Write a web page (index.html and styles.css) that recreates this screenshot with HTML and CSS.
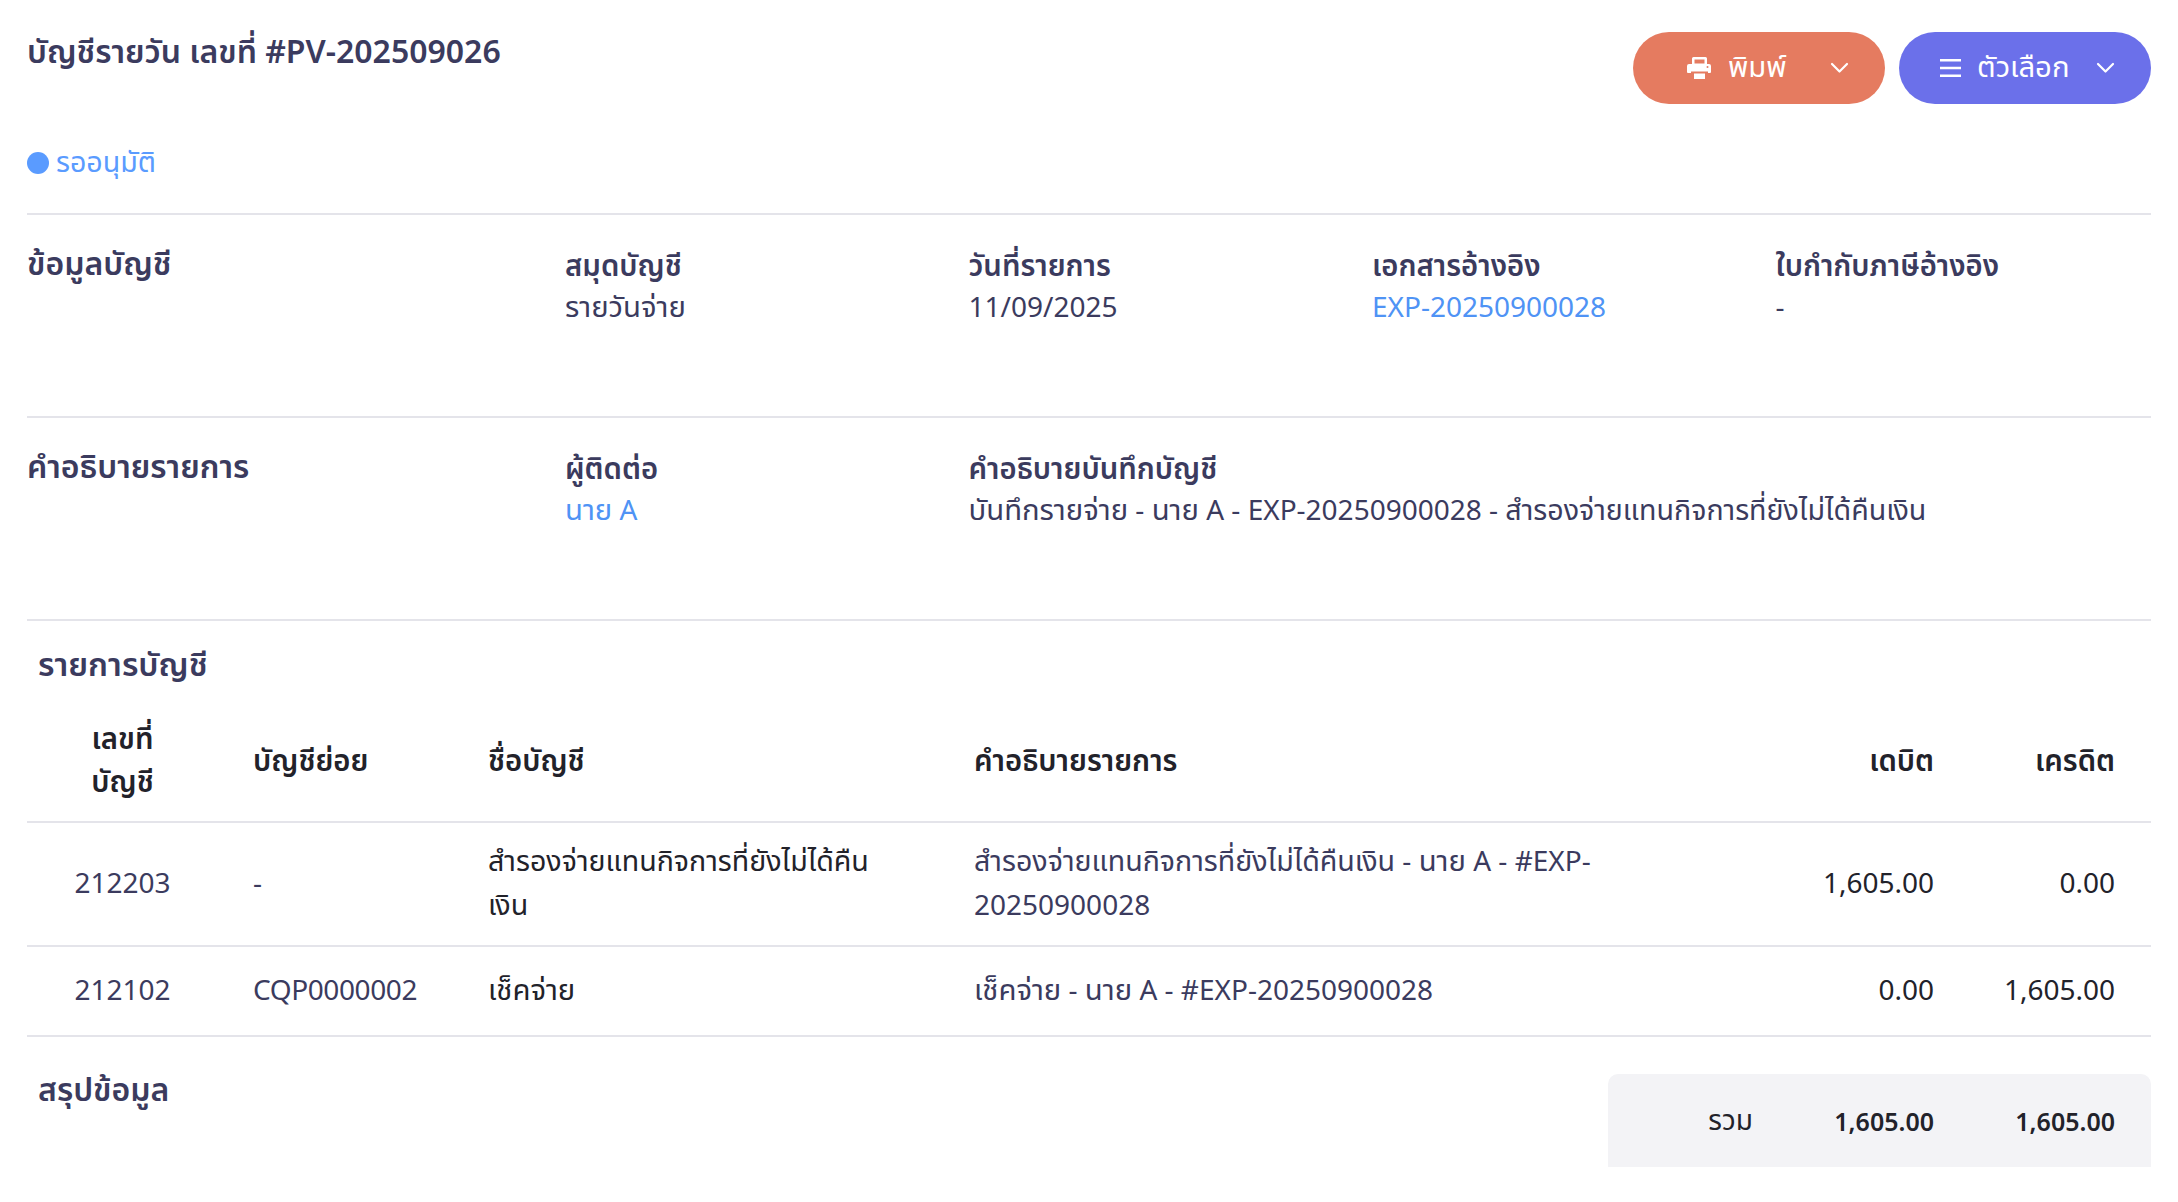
FILE: index.html
```html
<!DOCTYPE html>
<html lang="th">
<head>
<meta charset="utf-8">
<title>บัญชีรายวัน</title>
<link rel="stylesheet" href="styles.css">
</head>
<body>
<main class="page">
  <header class="top">
    <h1 class="title">บัญชีรายวัน เลขที่ #PV-202509026</h1>
    <div class="actions">
      <button class="btn btn-print">
        <svg class="icon-print" viewBox="0 0 24 22" aria-hidden="true"><path fill="#fff" fill-rule="evenodd" d="M5 7V1.5A1.5 1.5 0 0 1 6.5 0h12A1.5 1.5 0 0 1 20 1.5V7h2a2 2 0 0 1 2 2v6a1 1 0 0 1-1 1h-2v-1.5H4V16H1a1 1 0 0 1-1-1V9a2 2 0 0 1 2-2zM7.5 2.5V6.5h10V2.5zM20.5 9a1 1 0 1 0 0 2 1 1 0 0 0 0-2zM7 16.5h11V22H7z"/></svg>
        <span class="label-print">พิมพ์</span>
        <svg class="chev" viewBox="0 0 19 12" aria-hidden="true"><path d="M2 2l7.5 7.5L17 2" fill="none" stroke="#fff" stroke-width="2.2" stroke-linecap="round" stroke-linejoin="round"/></svg>
      </button>
      <button class="btn btn-options">
        <svg class="icon-menu" viewBox="0 0 21 18" aria-hidden="true"><path d="M0 1.3h21M0 9h21M0 16.7h21" fill="none" stroke="#fff" stroke-width="2.6"/></svg>
        <span class="label-options">ตัวเลือก</span>
        <svg class="chev" viewBox="0 0 19 12" aria-hidden="true"><path d="M2 2l7.5 7.5L17 2" fill="none" stroke="#fff" stroke-width="2.2" stroke-linecap="round" stroke-linejoin="round"/></svg>
      </button>
    </div>
  </header>
  <div class="status"><span class="dot"></span><span class="th-long">รออนุมัติ</span></div>

  <section class="info">
    <h2 class="info-title">ข้อมูลบัญชี</h2>
    <div class="field"><div class="label">สมุดบัญชี</div><div class="value th">รายวันจ่าย</div></div>
    <div class="field"><div class="label">วันที่รายการ</div><div class="value">11/09/2025</div></div>
    <div class="field"><div class="label">เอกสารอ้างอิง</div><div class="value link">EXP-20250900028</div></div>
    <div class="field"><div class="label">ใบกำกับภาษีอ้างอิง</div><div class="value">-</div></div>
  </section>

  <section class="info">
    <h2 class="info-title">คำอธิบายรายการ</h2>
    <div class="field"><div class="label">ผู้ติดต่อ</div><div class="value link"><span class="th">นาย</span> A</div></div>
    <div class="field wide"><div class="label">คำอธิบายบันทึกบัญชี</div><div class="value"><span class="th">บันทึกรายจ่าย</span> - <span class="th">นาย</span> A - EXP-20250900028 - <span class="th-long">สำรองจ่ายแทนกิจการที่ยังไม่ได้คืนเงิน</span></div></div>
  </section>

  <section class="ledger">
    <h2 class="sub-title">รายการบัญชี</h2>
    <table class="table">
      <thead>
        <tr>
          <th class="c-no">เลขที่<br>บัญชี</th>
          <th class="c-sub">บัญชีย่อย</th>
          <th class="c-name">ชื่อบัญชี</th>
          <th class="c-desc">คำอธิบายรายการ</th>
          <th class="c-num c-dr">เดบิต</th>
          <th class="c-num c-cr">เครดิต</th>
        </tr>
      </thead>
      <tbody>
        <tr>
          <td class="c-no">212203</td>
          <td class="c-sub">-</td>
          <td class="c-name"><span class="th-long">สำรองจ่ายแทนกิจการที่ยังไม่ได้คืน</span><wbr><span class="th-long">เงิน</span></td>
          <td class="c-desc"><span class="th-long">สำรองจ่ายแทนกิจการที่ยังไม่ได้คืนเงิน</span> - <span class="th">นาย</span> <span>A - #EXP-</span><wbr><span>20250900028</span></td>
          <td class="c-num c-dr">1,605.00</td>
          <td class="c-num c-cr">0.00</td>
        </tr>
        <tr>
          <td class="c-no">212102</td>
          <td class="c-sub c-code">CQP0000002</td>
          <td class="c-name"><span class="th">เช็คจ่าย</span></td>
          <td class="c-desc"><span class="th">เช็คจ่าย</span> - <span class="th">นาย</span> A - #EXP-20250900028</td>
          <td class="c-num c-dr">0.00</td>
          <td class="c-num c-cr">1,605.00</td>
        </tr>
      </tbody>
    </table>
  </section>

  <section class="summary">
    <h2 class="sub-title sub-title-summary">สรุปข้อมูล</h2>
    <div class="total">
      <span class="total-label">รวม</span>
      <span class="total-num">1,605.00</span>
      <span class="total-num">1,605.00</span>
    </div>
  </section>
</main>
</body>
</html>
```
FILE: styles.css
```css
* { box-sizing: border-box; }
html, body { margin: 0; background: #fff; }
body { font-family: "Noto Sans", "Noto Sans Thai", sans-serif; font-size: 28px; color: #3b3b5e; }
.th { font-size: 29.3px; }
.th-long { font-size: 28.6px; }
.page { padding: 32px 27px 35px; }
.top { display: flex; justify-content: space-between; align-items: flex-start; height: 71px; }
.title { margin: 0; font-size: 32px; font-weight: 600; line-height: 38px; }
.actions { display: flex; gap: 14px; }
.btn { width: 252px; height: 72px; border: 0; border-radius: 36px; color: #fff; font: inherit; font-size: 29.3px; display: flex; align-items: center; padding: 0 36px 0 54px; }
.btn-print { background: #e57b60; }
.btn-options { background: #6b70ea; padding-left: 41px; }
.icon-print { width: 24px; height: 22px; flex: none; margin-right: 17px; }
.icon-menu { width: 21px; height: 18px; flex: none; margin-right: 16px; }
.label-print, .label-options { flex: 1; text-align: left; }
.chev { width: 19px; height: 12px; flex: none; }
.status { display: flex; align-items: center; gap: 7px; color: #5a9bff; height: 40px; margin-top: 40px; margin-bottom: 30px; }
.dot { width: 22px; height: 22px; border-radius: 50%; background: #5a9bff; }
.info { display: grid; grid-template-columns: 538px repeat(4, 403.5px); border-top: 2px solid #e4e4ea; height: 203px; padding-top: 28px; }
.info-title { margin: 0; font-size: 32px; font-weight: 600; line-height: 40px; }
.label { font-size: 29.3px; font-weight: 600; line-height: 42px; padding-top: 1px; margin-bottom: -1px; }
.value { line-height: 42px; }
.link { color: #4f93f5; }
.wide { grid-column: span 3; }
.ledger { border-top: 2px solid #e4e4ea; padding-top: 23px; }
.sub-title { margin: 0 0 0 11px; font-size: 32.5px; font-weight: 600; line-height: 40px; }
.sub-title-summary { margin-top: -5px; font-size: 32px; }
.table { width: 100%; border-collapse: collapse; table-layout: fixed; margin-top: 21px; color: #22222a; }
.table th { font-size: 29.3px; font-weight: 600; text-align: left; line-height: 43px; padding: 12px 0 18px; }
.table td { line-height: 44px; height: 90px; padding: 15px 0 19px; border-top: 2px solid #e4e4ea; vertical-align: middle; }
.table tr:last-child td { border-bottom: 2px solid #e4e4ea; }
.table .c-no { width: 226px; text-align: center; padding-right: 35px; }
.table td.c-no, .table td.c-sub, .table td.c-desc { color: #3b3b5e; }
.table .c-sub { width: 235px; }
.table .c-code { letter-spacing: -0.4px; }
.table .c-name { width: 486px; padding-right: 100px; }
.table .c-desc { width: 800px; padding-right: 150px; }
.table .c-num { text-align: right; padding-right: 36px; }
.table .c-cr { width: 181px; }
.summary { display: flex; justify-content: space-between; align-items: flex-start; padding-top: 37px; }
.total { width: 543px; height: 93px; background: #f3f3f6; border-radius: 10px 10px 0 0; display: grid; grid-template-columns: 1fr 181px 181px; align-items: center; padding-right: 36px; color: #22222a; }
.total-label { text-align: right; font-size: 28px; padding-top: 2px; }
.total-num { text-align: right; font-size: 25px; font-weight: 600; }
```
